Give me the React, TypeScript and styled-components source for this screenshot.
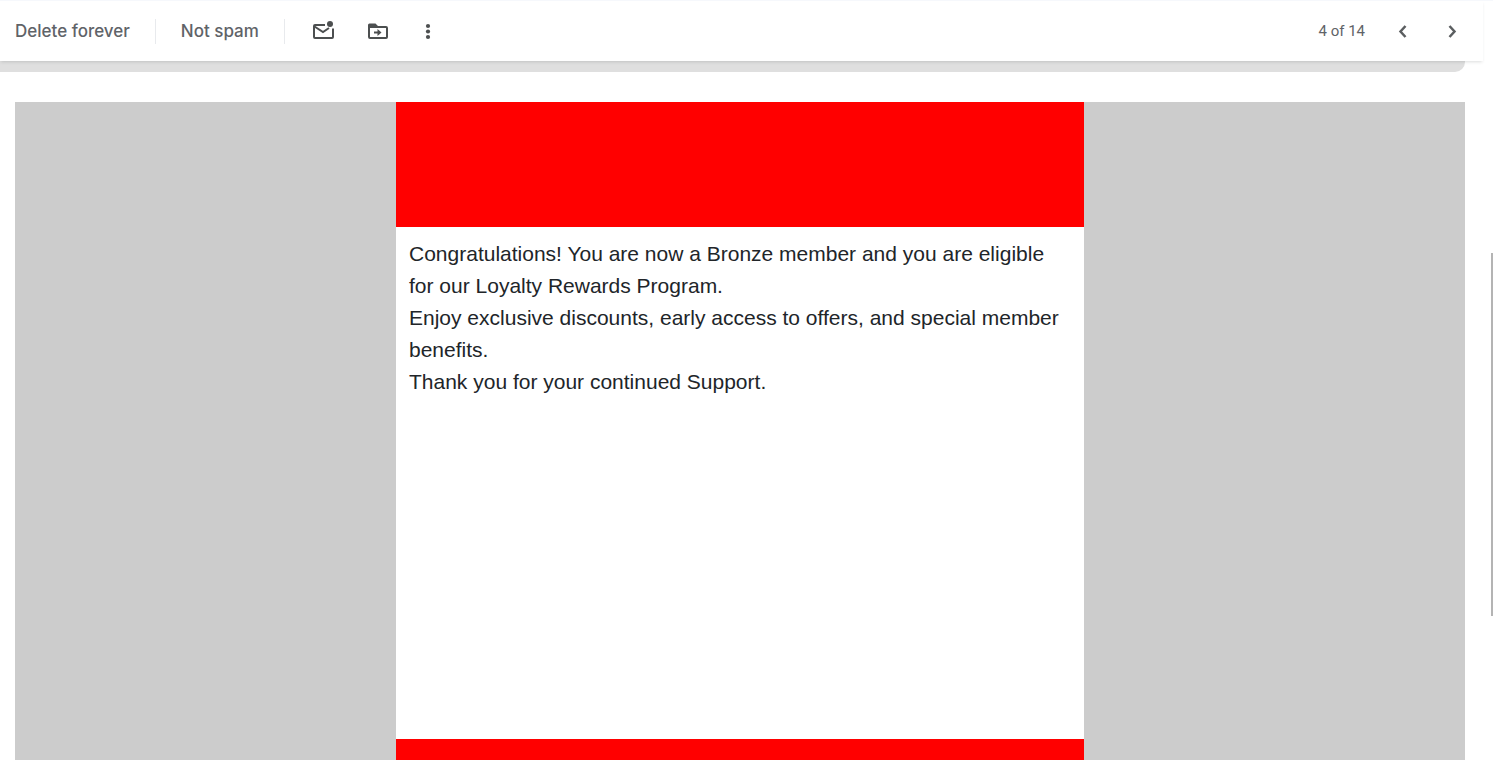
import React from "react";
import styled, { createGlobalStyle } from "styled-components";

const GlobalStyle = createGlobalStyle`
  *, *::before, *::after { box-sizing: border-box; }
  body { margin: 0; background: #fff; }
`;

const Frame = styled.div`
  display: flex;
  height: 100vh;
  overflow: hidden;
  border-top: 1px solid #f6f8fc;
  background: #fff;
`;

const Pane = styled.div`
  flex: 1;
  min-width: 0;
`;

const ScrollTrack = styled.div`
  flex: none;
  width: 10px;
  display: flex;
  justify-content: flex-end;
  padding-top: 252px;
`;

const ScrollThumb = styled.div`
  width: 2px;
  height: 363px;
  background: #b4b4b4;
`;

const Toolbar = styled.header`
  position: relative;
  display: flex;
  align-items: center;
  justify-content: space-between;
  height: 60px;
  padding: 0 6px 0 15px;
  background: #fff;
  box-shadow: 0 2px 3px -1px rgba(60, 64, 67, 0.18);
  color: #5f6368;
`;

const Group = styled.div`
  display: flex;
  align-items: center;
`;

const TextButton = styled.button`
  border: 0;
  padding: 0;
  background: none;
  font: 500 17px/24px Inter, "Liberation Sans", sans-serif;
  color: inherit;
  cursor: pointer;
`;

const Divider = styled.span`
  width: 1px;
  height: 25px;
  margin: 0 25px;
  background: #e8eaed;
`;

const IconButton = styled.button<{ $width: number }>`
  display: flex;
  align-items: center;
  justify-content: center;
  width: ${(p) => p.$width}px;
  height: 40px;
  border: 0;
  padding: 0;
  background: none;
  color: #4c4f50;
  cursor: pointer;

  svg {
    display: block;
    flex: none;
  }
`;

const Position = styled.span`
  margin-right: 12px;
  font: 15px/20px Roboto, "Liberation Sans", sans-serif;
`;

const SubjectStrip = styled.div`
  height: 11px;
  margin-right: 18px;
  border-bottom-right-radius: 10px;
  background: #dfdfdf;
`;

const Message = styled.main`
  display: flex;
  justify-content: center;
  margin: 30px 18px 0 15px;
  background: #ccc;
`;

const Letter = styled.article`
  width: 688px;
  max-width: 100%;
  background: #fff;
`;

const Band = styled.div`
  height: 125px;
  background: #f00;
`;

const Body = styled.div`
  min-height: 512px;
  padding: 11px 13px;
  font: 21px/32px "Liberation Sans", Arial, sans-serif;
  color: #212529;

  p { margin: 0; }
`;

const UnreadIcon = () => (
  <svg width="26" height="26" viewBox="0 0 26 26" fill="none" stroke="currentColor" strokeWidth="2">
    <path d="M15 7H5a1 1 0 0 0-1 1v11a1 1 0 0 0 1 1h17a1 1 0 0 0 1-1V10.5" />
    <path d="M4.500 8.500L13 14l6-4" />
    <circle cx="20" cy="6" r="3" fill="currentColor" stroke="none" />
  </svg>
);

const MoveIcon = () => (
  <svg width="26" height="26" viewBox="0 0 26 26" fill="none" stroke="currentColor" strokeWidth="2">
    <path d="M4 8v11a1 1 0 0 0 1 1h16a1 1 0 0 0 1-1V10a1 1 0 0 0-1-1H12" />
    <path d="M4.500 5.500H10.500L13 8V10H3V7A1.500 1.500 0 0 1 4.500 5.500z" fill="currentColor" stroke="none" />
    <path d="M9 14.500h4.500" />
    <path d="M12.500 11l4 3.500-4 3.500z" fill="currentColor" stroke="none" />
  </svg>
);

const MoreIcon = () => (
  <svg width="24" height="24" viewBox="0 0 24 24" fill="currentColor">
    <circle cx="12" cy="7" r="2.100" />
    <circle cx="12" cy="12.500" r="2.100" />
    <circle cx="12" cy="18" r="2.100" />
  </svg>
);

const Chevron = ({ d }: { d: string }) => (
  <svg width="24" height="24" viewBox="0 0 24 24" fill="none" stroke="#5b5e60" strokeWidth="2.500">
    <path d={d} />
  </svg>
);

export default function App() {
  return (
    <>
      <GlobalStyle />
      <Frame>
        <Pane>
          <Toolbar>
            <Group>
              <TextButton type="button">Delete forever</TextButton>
              <Divider />
              <TextButton type="button">Not spam</TextButton>
              <Divider />
              <IconButton $width={26} type="button" aria-label="Mark as unread"><UnreadIcon /></IconButton>
              <IconButton $width={84} type="button" aria-label="Move to"><MoveIcon /></IconButton>
              <IconButton $width={16} type="button" aria-label="More"><MoreIcon /></IconButton>
            </Group>
            <Group>
              <Position>4 of 14</Position>
              <IconButton $width={50} type="button" aria-label="Newer"><Chevron d="M15.500 7L10.500 12.500l5 5.500" /></IconButton>
              <IconButton $width={50} type="button" aria-label="Older"><Chevron d="M9.500 7l5 5.500L9.500 18" /></IconButton>
            </Group>
          </Toolbar>
          <SubjectStrip />
          <Message>
            <Letter>
              <Band />
              <Body>
                <p>Congratulations! You are now a Bronze member and you are eligible for our Loyalty Rewards Program.</p>
                <p>Enjoy exclusive discounts, early access to offers, and special member benefits.</p>
                <p>Thank you for your continued Support.</p>
              </Body>
              <Band />
            </Letter>
          </Message>
        </Pane>
        <ScrollTrack>
          <ScrollThumb />
        </ScrollTrack>
      </Frame>
    </>
  );
}
